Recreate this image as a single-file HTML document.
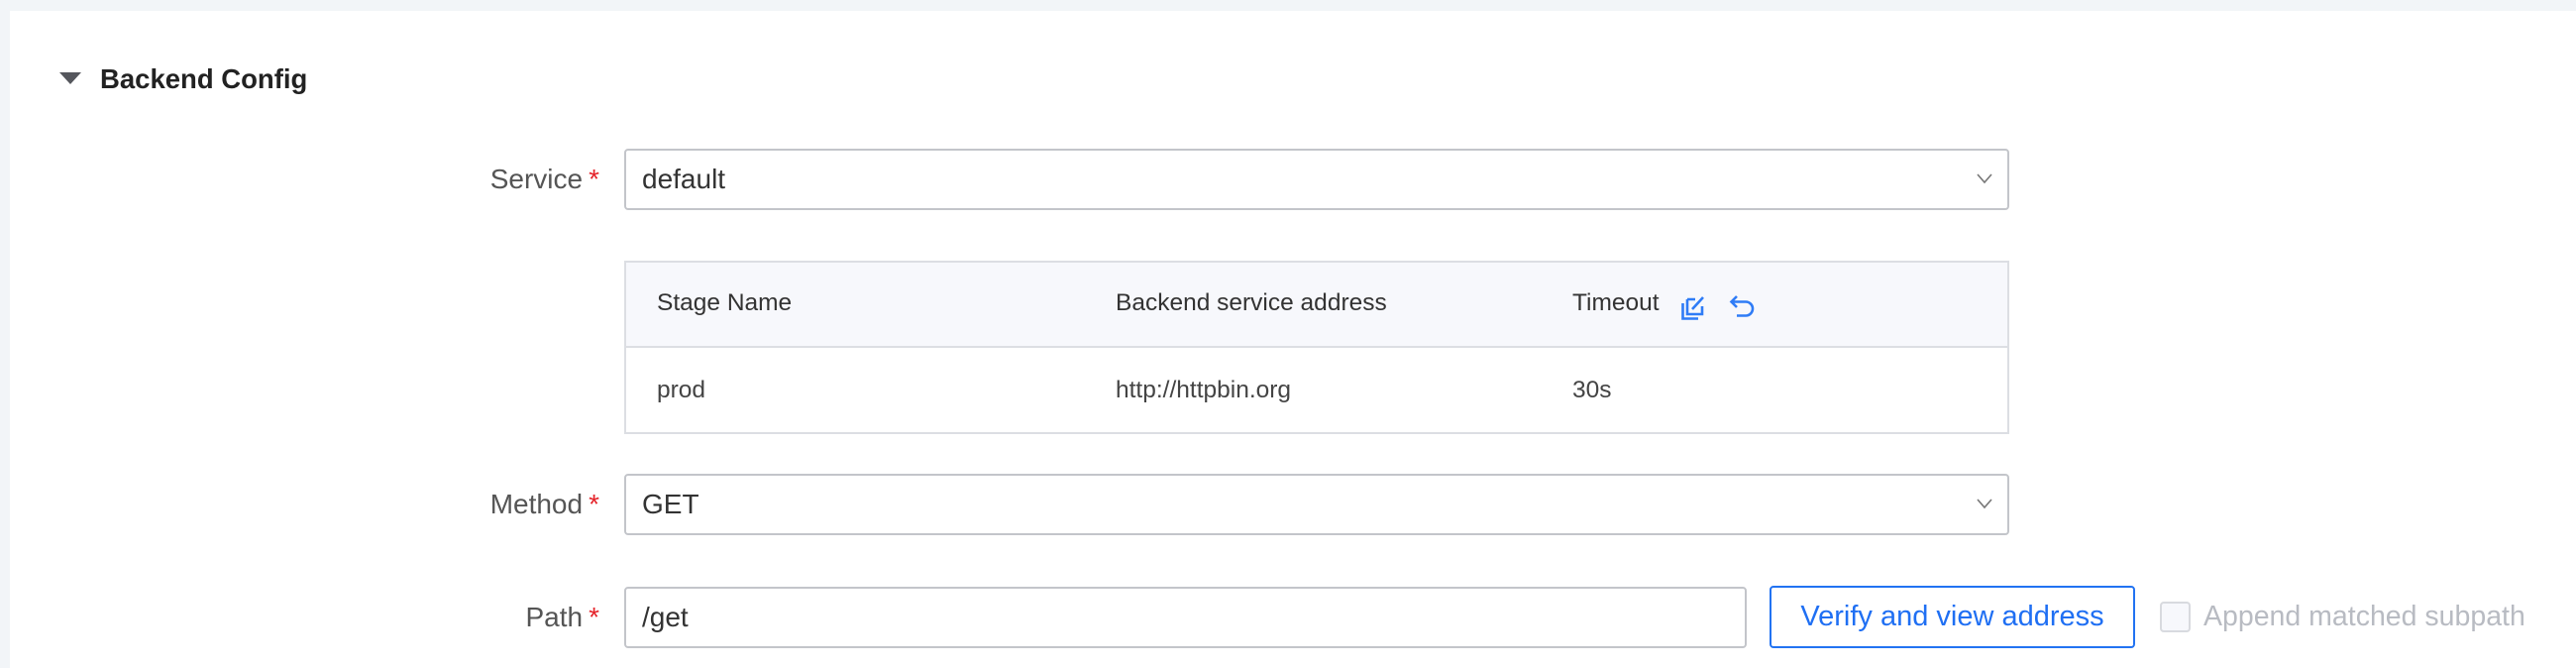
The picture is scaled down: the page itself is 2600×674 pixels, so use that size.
<!DOCTYPE html>
<html><head><meta charset="utf-8"><style>
*{margin:0;padding:0;box-sizing:border-box}
body{width:2600px;height:674px;background:#f2f5f8;font-family:"Liberation Sans",Arial,sans-serif;position:relative;overflow:hidden}
.card{position:absolute;left:10px;top:11px;width:2590px;height:663px;background:#fff}
.abs{position:absolute}
.lbl{position:absolute;right:1995px;font-size:28px;color:#555;white-space:nowrap;line-height:62px}
.lbl b{color:#e5242b;font-weight:normal;margin-left:6px}
.inp{position:absolute;left:630px;border:2px solid #c3c5ca;border-radius:4px;background:#fff;font-size:28px;color:#333;line-height:58px;padding-left:16px;height:62px}
.chev{position:absolute;right:14px;top:22px}
.th,.td{position:absolute;font-size:24.5px;color:#333;white-space:nowrap}
</style></head><body>
<div class="card"></div>
<svg class="abs" style="left:60px;top:73px" width="22" height="12"><polygon points="0,0 22,0 11,12" fill="#55575d"/></svg>
<div class="abs" style="left:101px;top:63px;font-size:27.5px;font-weight:bold;color:#222;line-height:34px">Backend Config</div>

<div class="lbl" style="top:150px">Service<b>*</b></div>
<div class="inp" style="top:150px;width:1398px">default<svg class="chev" width="18" height="12"><path d="M2 2 L9 10 L16 2" stroke="#777" stroke-width="1.6" fill="none"/></svg></div>

<div class="abs" style="left:630px;top:263px;width:1398px;height:175px;border:2px solid #dcdee3;background:#fff">
 <div class="abs" style="left:0;top:0;width:1394px;height:86px;background:#f7f8fc;border-bottom:2px solid #dcdee3"></div>
</div>
<div class="th" style="left:663px;top:292px">Stage Name</div>
<div class="th" style="left:1126px;top:292px">Backend service address</div>
<div class="th" style="left:1587px;top:292px">Timeout</div>
<svg class="abs" style="left:1697px;top:297px" width="27" height="26" viewBox="0 0 27 26"><path d="M6 5 H14 M6 5 V20 H21 V12" stroke="#2f7cf6" stroke-width="2.6" fill="none"/><path d="M1.5 9 V24.5 H17" stroke="#2f7cf6" stroke-width="2.6" fill="none"/><path d="M11 15 L22 3" stroke="#2f7cf6" stroke-width="2.6"/></svg>
<svg class="abs" style="left:1745px;top:297px" width="27" height="26" viewBox="0 0 27 26"><path d="M8 2 L2.5 7.5 L8 13 M2.5 7.5 H17 A7 7 0 0 1 17 21.5 H8" stroke="#2f7cf6" stroke-width="2.6" fill="none"/></svg>
<div class="td" style="left:663px;top:380px;color:#444">prod</div>
<div class="td" style="left:1126px;top:380px;color:#444">http://httpbin.org</div>
<div class="td" style="left:1587px;top:380px;color:#444">30s</div>

<div class="lbl" style="top:478px">Method<b>*</b></div>
<div class="inp" style="top:478px;width:1398px">GET<svg class="chev" width="18" height="12"><path d="M2 2 L9 10 L16 2" stroke="#777" stroke-width="1.6" fill="none"/></svg></div>

<div class="lbl" style="top:592px">Path<b>*</b></div>
<div class="inp" style="top:592px;width:1133px">/get</div>
<div class="abs" style="left:1786px;top:591px;width:369px;height:63px;border:2px solid #2273f2;border-radius:4px;color:#1f6ff3;font-size:29px;line-height:59px;text-align:center;white-space:nowrap">Verify and view address</div>
<div class="abs" style="left:2180px;top:607px;width:31px;height:31px;border:2px solid #d8dadf;border-radius:4px;background:#f7f8fc"></div>
<div class="abs" style="left:2224px;top:605px;font-size:28.5px;color:#b8bbc2;line-height:34px;white-space:nowrap">Append matched subpath</div>
</body></html>
